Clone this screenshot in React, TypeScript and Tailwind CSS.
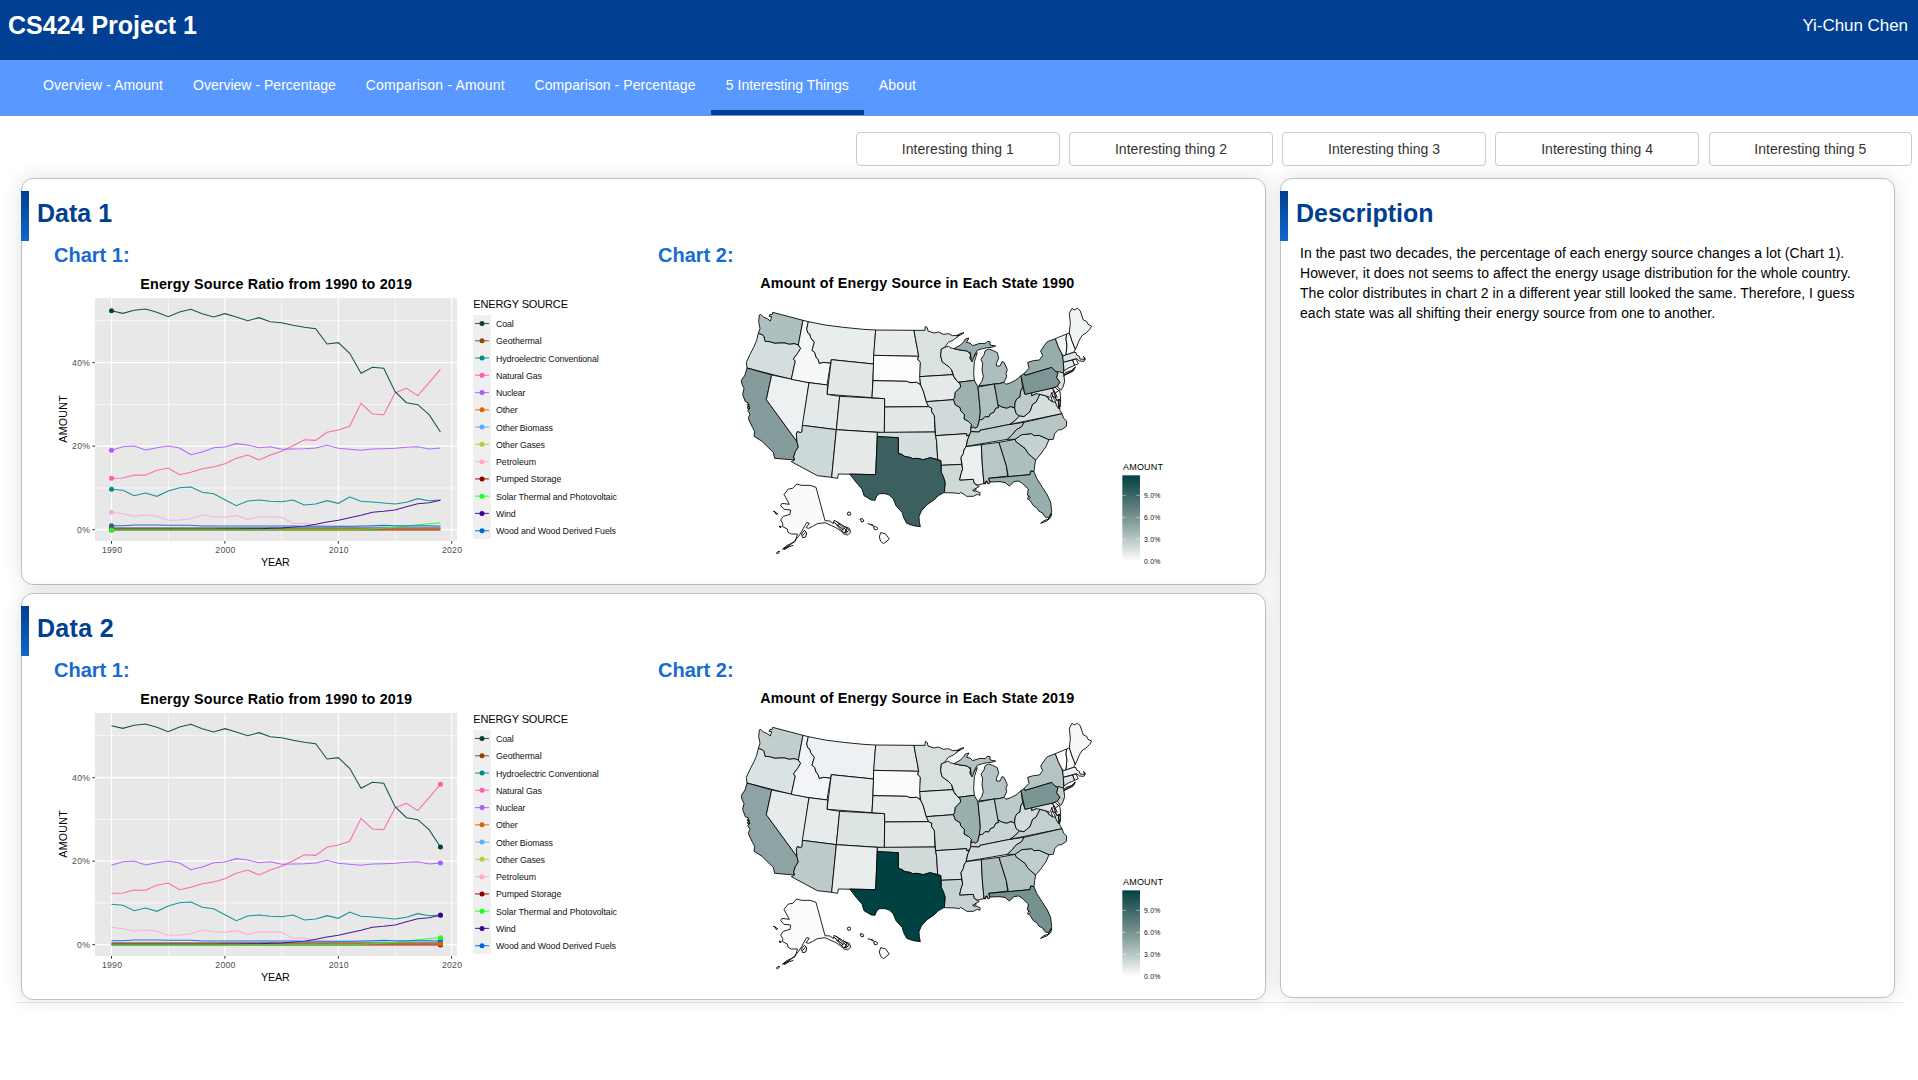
import React from "react";

const NAV: [string, string][] = [
  ["Overview - Amount", "w-[150px] tracking-[0.1px]"],
  ["Overview - Percentage", "w-[172.8px] tracking-[0.02px]"],
  ["Comparison - Amount", "w-[168.8px] tracking-[0.19px]"],
  ["Comparison - Percentage", "w-[191.2px] tracking-[0.06px]"],
  ["5 Interesting Things", "w-[153px] tracking-[0.02px]"],
  ["About", "w-[68px] tracking-[0.15px]"],
];

type Series = { name: string; color: string; y: number[] };

const fill = (n: number, v: number) => Array.from({ length: n }, () => v);

// Vertical plot positions, one per year from 1990 to 2019.
const SERIES: Series[] = [
  { name: "Coal", color: "#004242", y: [182, 190, 181, 177, 187, 200, 186, 178, 191, 201, 191, 201, 212, 203, 215, 218, 226, 232, 236, 282, 278, 310, 370, 352, 355, 425, 458, 464, 494, 546] },
  { name: "Geothermal", color: "#8f4700", y: fill(30, 834) },
  { name: "Hydroelectric Conventional", color: "#008b8b", y: [718, 721, 737, 729, 739, 723, 713, 711, 727, 731, 749, 767, 753, 750, 754, 755, 750, 765, 762, 752, 760, 741, 754, 756, 759, 762, 757, 746, 752, 750] },
  { name: "Natural Gas", color: "#ff5cad", y: [685, 684, 675, 676, 661, 654, 674, 667, 656, 651, 641, 625, 615, 630, 615, 604, 587, 569, 571, 547, 540, 529, 460, 492, 494, 429, 415, 437, 398, 358] },
  { name: "Nuclear", color: "#a85cff", y: [601, 590, 588, 600, 593, 588, 594, 614, 606, 593, 591, 581, 585, 593, 590, 598, 597, 596, 594, 586, 595, 598, 601, 597, 596, 595, 592, 590, 597, 594] },
  { name: "Other", color: "#db6600", y: fill(30, 837) },
  { name: "Other Biomass", color: "#5cadff", y: [...fill(10, 834), ...fill(10, 833), ...fill(10, 831)] },
  { name: "Other Gases", color: "#c4c43d", y: fill(30, 836) },
  { name: "Petroleum", color: "#ffa8d4", y: [787, 791, 799, 795, 799, 811, 810, 806, 795, 800, 802, 797, 808, 801, 801, 802, 820, 820, 826, 829, 830, 832, 834, 833, 832, 833, 834, 834, 833, 834] },
  { name: "Pumped Storage", color: "#8b0000", y: fill(30, 840) },
  { name: "Solar Thermal and Photovoltaic", color: "#1aff1a", y: [...fill(22, 839), 838, 836, 834, 832, 829, 824, 821, 818] },
  { name: "Wind", color: "#3d008f", y: [...fill(9, 838), 838, 837, 837, 836, 836, 835, 834, 831, 829, 823, 816, 811, 803, 796, 787, 784, 780, 770, 761, 758, 751] },
  { name: "Wood and Wood Derived Fuels", color: "#0066db", y: [827, 827, 825, 825, 825, 826, 826, 826, ...fill(8, 828), 828, 829, 829, 829, 829, 829, 828, 827, 826, 827, 827, 827, 827, 828] },
];

const LEGEND_WIDTHS = [53, 137, 308, 138, 88, 65, 171, 147, 120, 196, 363, 59, 360];

const DOTS_1990 = [3, 0, 4, 2, 8, 12, 1, 9, 11, 10];
const DOTS_2019 = [3, 0, 4, 2, 12, 9, 10, 11, 5];

const yearX = (i: number) => 274.5 + i * 34.03;

function LineChart({ dotYear }: { dotYear: number }) {
  const drawOrder = [3, 0, 4, 2, 8, 6, 7, 5, 1, 9, 11, 10, 12].map((i) => SERIES[i]);
  const dots = (dotYear === 0 ? DOTS_1990 : DOTS_2019).map((i) => SERIES[i]);
  return (
    <svg viewBox="6 60 1884 906" className="h-[302px] w-[628px] shrink-0" fontFamily="'Liberation Sans', Arial, sans-serif">
      <text x="361" y="116" fontSize="43" fontWeight="bold" textLength="815">Energy Source Ratio from 1990 to 2019</text>
      <rect x="225" y="144" width="1086" height="729" fill="#e8e8e8" />
      <g stroke="#fff">
        {[212, 463, 714].map((y) => <line key={y} x1="225" x2="1311" y1={y} y2={y} strokeWidth="2" />)}
        {[445, 785, 1126].map((x) => <line key={x} y1="144" y2="873" x1={x} x2={x} strokeWidth="2" />)}
        {[338, 588.5, 839].map((y) => <line key={y} x1="225" x2="1311" y1={y} y2={y} strokeWidth="3.4" />)}
        {[274.5, 614.5, 955, 1295].map((x) => <line key={x} y1="144" y2="873" x1={x} x2={x} strokeWidth="3.4" />)}
      </g>
      <g stroke="#333" strokeWidth="3">
        {[338, 588.5, 839].map((y) => <line key={y} x1="217" x2="225" y1={y} y2={y} />)}
        {[274.5, 614.5, 955, 1295].map((x) => <line key={x} y1="873" y2="881" x1={x} x2={x} />)}
      </g>
      <g fontSize="26" fill="#4d4d4d">
        <text x="156" y="347" textLength="54">40%</text>
        <text x="156" y="598" textLength="54">20%</text>
        <text x="171" y="848" textLength="39">0%</text>
        {["1990", "2000", "2010", "2020"].map((t, i) => (
          <text key={t} x={246 + i * 340} y="908" textLength="60">{t}</text>
        ))}
      </g>
      <text x="723" y="948" fontSize="32" textLength="86">YEAR</text>
      <text transform="translate(140 578) rotate(-90)" fontSize="32" textLength="142">AMOUNT</text>
      {drawOrder.map((s) => (
        <polyline key={s.name} points={s.y.map((y, i) => `${yearX(i)},${y}`).join(" ")} fill="none" stroke={s.color} strokeWidth="3.2" opacity="0.9" />
      ))}
      {dots.map((s) => (
        <circle key={s.name} cx={yearX(dotYear)} cy={s.y[dotYear]} r="7.5" fill={s.color} />
      ))}
      <text x="1360" y="174" fontSize="33" textLength="284">ENERGY SOURCE</text>
      <rect x="1359" y="195" width="54" height="672" fill="#efefef" />
      {SERIES.map((s, i) => (
        <g key={s.name}>
          <line x1="1365" x2="1407" y1={220.5 + i * 51.8} y2={220.5 + i * 51.8} stroke={s.color} strokeWidth="3.4" opacity="0.8" />
          <circle cx="1386" cy={220.5 + i * 51.8} r="7.5" fill={s.color} />
          <text x="1428" y={231 + i * 51.8} fontSize="26.5" fill="#111" textLength={LEGEND_WIDTHS[i]}>{s.name}</text>
        </g>
      ))}
    </svg>
  );
}

// [outline, fill in 1990, fill in 2019]
const STATES: [string, string, string][] = [
  ["88,150 92,148 100,156 112,161 121,168 125,155 117,154 120,148 126,149 128,142 219,166 205,240 193,236 178,238 165,234 150,234 135,235 118,230 105,229 102,215 98,210 85,205 90,190 86,170", "#adbfbf", "#c2cece"],
  ["85,205 98,210 102,215 105,229 118,230 135,235 150,234 165,234 178,238 193,236 205,240 212,250 205,262 190,282 196,288 192,305 184,343 51,309 49,292 60,268 72,245 80,226", "#d5dede", "#dae3e3"],
  ["51,309 125,330 109,404 201,530 205,546 196,560 191,576 194,585 134,580 130,562 112,545 95,528 72,514 74,500 68,488 58,468 55,458 60,448 53,436 59,430 52,418 56,414 46,410 38,388 42,370 36,358 34,346 45,330", "#849c9b", "#8ea4a4"],
  ["125,330 237,353 216,500 212,503 202,500 199,508 201,530 109,404", "#edf1f2", "#e6ebeb"],
  ["219,166 235,170 230,192 234,204 240,208 242,218 253,232 246,256 254,262 258,276 264,283 268,295 280,292 302,294 291,360 237,353 184,343 192,305 196,288 190,282 205,262 212,250 205,240", "#f7f9f8", "#f2f4f7"],
  ["235,170 285,180 340,187 400,193 437,195 430,297 304,284 302,294 280,292 268,295 264,283 258,276 254,262 246,256 253,232 242,218 240,208 234,204 230,192", "#e8eeed", "#eef1f3"],
  ["304,284 431,297 426,398 291,388", "#e1e8e7", "#e6ebeb"],
  ["237,353 293,360 291,388 329,394 319,494 217,481", "#e4e9e9", "#e6ebeb"],
  ["329,394 464,401 463,503 319,494", "#e3e8e8", "#dde5e4"],
  ["217,481 319,494 305,637 262,632 184,590 194,585 191,576 196,560 205,546 201,530 199,508 202,500 212,503 216,500", "#cdd8d8", "#bdcbcb"],
  ["319,494 442,502 437,629 325,627 323,640 305,637", "#e6ebea", "#e9eeed"],
  ["437,195 552,196 556,220 562,250 566,274 431,271", "#e8eceb", "#e5eae9"],
  ["431,271 566,274 563,282 571,292 571,335 570,358 560,352 540,353 530,349 429,347", "#fcfdfc", "#fafbfa"],
  ["429,347 530,349 540,353 560,352 572,360 580,378 586,400 589,410 596,425 464,426 464,401 426,398", "#eaeff0", "#e6ebea"],
  ["464,426 596,425 606,430 604,438 613,452 615,501 463,503", "#e3e8e8", "#e1e8e6"],
  ["442,502 615,501 620,530 623,583 612,581 600,578 580,584 560,580 548,581 540,577 525,575 515,568 505,566 505,518 442,515", "#d6dfe0", "#d0dbda"],
  ["442,515 505,518 505,566 515,568 525,575 540,577 548,581 560,580 580,584 600,578 612,581 623,585 633,587 634,622 640,634 646,652 643,682 625,692 612,705 590,720 574,738 567,755 568,770 571,785 550,782 530,775 522,760 516,742 498,722 490,702 478,690 465,686 448,686 440,693 435,706 424,705 402,692 396,672 380,654 359,627 437,629", "#3b605f", "#004242"],
  ["552,196 585,196 586,184 592,188 594,198 612,204 625,201 640,208 655,206 668,212 690,210 670,225 655,232 643,248 634,252 632,272 636,290 655,304 665,314 668,329 569,335 571,292 563,282 566,274 562,250 556,220", "#dae2e1", "#d7e0df"],
  ["680,213 690,206 702,203 692,210", "#b2c0c0", "#b2c0c0"],
  ["569,335 668,329 675,342 690,354 692,366 676,382 674,398 670,404 589,410 580,378 572,360", "#e5e9ea", "#dee5e5"],
  ["643,248 656,243 660,248 672,251 690,255 712,258 722,268 720,280 726,285 738,265 742,263 733,290 731,325 733,346 684,352 672,335 665,314 655,304 636,290 632,272 634,252", "#dbe3e1", "#dbe3e1"],
  ["672,251 690,241 700,232 706,222 717,219 709,232 720,234 728,242 750,235 766,236 772,229 780,230 780,240 797,243 785,247 772,248 758,251 742,256 736,265 726,291 720,280 722,268 712,258 690,255", "#9aafaf", "#b4c3c3"],
  ["746,363 755,350 760,335 756,315 758,295 753,283 762,270 765,258 775,252 788,256 802,263 806,280 799,295 800,303 810,303 816,290 822,292 832,314 828,325 830,335 822,352 808,356 793,357", "#acbebe", "#b5c4c4"],
  ["684,352 733,346 744,366 751,440 748,465 743,485 735,490 730,486 722,490 724,478 716,470 702,462 703,448 692,438 690,428 676,420 670,404 674,398 676,382 692,366 690,354", "#9cb1b0", "#9ab0af"],
  ["744,366 793,357 806,428 797,430 792,442 782,446 776,456 765,455 758,463 748,465 751,440", "#afc0c0", "#c5d0d0"],
  ["793,357 808,356 822,352 828,358 842,353 858,345 873,332 878,368 872,378 870,396 860,402 855,414 854,429 842,425 830,430 815,426 804,420", "#9ab0af", "#bccaca"],
  ["722,500 722,490 730,486 735,490 743,485 748,465 758,463 765,455 776,456 782,446 792,442 797,430 806,428 804,420 815,426 830,430 842,425 854,429 858,445 868,453 855,467 840,478 750,496 748,501", "#c2cece", "#c9d4d4"],
  ["722,500 748,501 750,496 840,478 882,472 875,485 858,495 848,508 832,523 709,544 712,525 718,510", "#becccb", "#d0dada"],
  ["878,368 885,388 906,382 905,392 918,386 925,384 930,388 924,400 918,412 908,418 900,440 882,455 868,453 858,445 854,429 855,414 860,402 870,396 872,378", "#bdcbca", "#d3dcdc"],
  ["840,478 855,467 868,453 882,455 900,440 908,418 918,412 924,400 930,388 945,392 956,400 966,410 980,412 988,425 990,436 996,446", "#d6dfde", "#c4d0d0"],
  ["906,382 968,369 980,406 991,402 988,418 985,430 979,420 974,404 968,395 966,382 962,392 968,410 954,402 958,396 946,392 930,388 918,386 905,392", "#d6dfde", "#dce3e3"],
  ["968,369 975,367 990,380 992,402 980,406", "#eff3f3", "#eff3f3"],
  ["985,410 992,405 991,424 987,432", "#d6dfde", "#dce3e3"],
  ["873,332 883,325 885,331 965,307 975,318 985,322 980,338 990,352 982,364 968,369 885,388", "#7c9695", "#799594"],
  ["883,325 897,310 893,292 910,287 928,285 938,272 932,258 944,240 952,230 976,221 985,245 995,265 1000,285 1001,325 985,322 975,318 965,307 885,331", "#97adac", "#b4c4c3"],
  ["998,332 1008,322 1025,317 1036,306 1030,318 1012,327", "#97adac", "#b4c4c3"],
  ["985,319 1001,325 1004,350 998,368 992,376 982,364 990,352 980,338", "#dbe3e2", "#c5d0d0"],
  ["976,221 1010,207 1008,222 1011,240 1008,270 1000,273 995,265 985,245", "#f5f7f7", "#fdfdfd"],
  ["1010,207 1018,203 1026,228 1036,253 1031,262 1008,270 1011,240 1008,222", "#f7f9f9", "#f7f8fa"],
  ["1018,203 1021,175 1018,145 1026,130 1032,135 1042,130 1050,136 1060,165 1070,169 1074,178 1085,183 1079,193 1068,204 1056,212 1048,225 1042,240 1036,253 1026,228", "#f0f4f4", "#f5f7f6"],
  ["998,273 1031,262 1038,263 1040,270 1048,274 1050,282 1065,283 1060,274 1066,281 1062,289 1048,288 1040,281 1000,292", "#dbe3e2", "#edf0f1"],
  ["1000,292 1028,285 1034,301 1015,309 1002,318", "#e2e9e8", "#dde4e4"],
  ["1028,285 1038,282 1045,296 1034,301", "#fff", "#f2f4f5"],
  ["589,410 670,404 676,420 690,428 692,438 703,448 702,462 716,470 724,478 722,490 722,500 718,510 710,513 710,506 617,512 613,452 604,438 606,430 596,425", "#d1dada", "#d0dad9"],
  ["617,512 710,506 710,513 718,510 712,525 708,545 702,555 700,566 693,578 695,598 634,601 633,587 623,583 620,530", "#e1e8e6", "#d8e0e1"],
  ["634,601 695,598 698,612 692,630 689,645 730,643 733,655 742,662 748,664 738,670 737,678 750,683 750,691 742,688 730,694 710,694 702,688 692,682 688,686 676,684 643,683 646,652 640,634 634,622", "#ced9d8", "#c6d2d2"],
  ["708,545 754,539 757,600 762,656 742,660 733,655 730,643 689,645 692,630 698,612 693,578 700,566 702,555", "#eaefef", "#d5dede"],
  ["754,539 807,532 829,602 833,633 776,640 780,654 774,657 769,648 766,657 762,656 757,600", "#b9c8c7", "#aebfbd"],
  ["807,532 855,523 858,530 885,550 895,566 917,585 914,602 912,620 902,618 900,629 835,635 829,602", "#aebfbe", "#b3c3c2"],
  ["855,523 875,509 905,506 912,512 928,511 957,524 948,545 930,570 917,585 895,566 885,550 858,530", "#c5d1d0", "#c0cecd"],
  ["882,472 996,446 1001,460 1010,468 1009,484 995,494 985,495 974,506 970,523 957,524 928,511 912,512 905,506 875,509 855,523 832,523 848,508 858,495 875,485", "#b7c6c5", "#b4c4c4"],
  ["776,640 835,635 900,629 902,618 912,620 920,640 938,668 952,690 962,712 965,740 957,757 948,757 942,752 938,744 926,738 922,730 910,722 900,706 895,703 901,697 892,690 895,672 878,656 866,648 852,650 838,663 826,653 810,650 780,651", "#97aeac", "#759190"],
  ["200,657 215,661 240,661 258,667 285,767 300,768 310,776 312,766 325,773 342,784 358,790 362,802 352,810 340,806 330,796 316,787 300,780 285,773 262,776 248,784 236,790 228,788 238,775 230,773 220,790 215,800 205,815 192,830 175,844 158,853 170,842 195,830 200,816 202,807 184,807 174,802 172,792 158,785 158,775 152,765 160,754 180,748 182,735 162,733 152,722 156,715 178,718 162,688 175,672 188,670", "#f9fbfb", "#fbfcfc"],
  ["452,803 466,806 478,822 461,836 452,829 448,816", "#fbfcfc", "#fff"],
];

function UsMap({ year }: { year: "1990" | "2019" }) {
  const col = year === "1990" ? 1 : 2;
  return (
    <svg viewBox="-240 15 1842 906" className="h-[302px] w-[614px] shrink-0" fontFamily="'Liberation Sans', Arial, sans-serif">
      <defs>
        <linearGradient id={`scale-${year}`} x1="0" x2="0" y1="0" y2="1">
          <stop offset="0" stopColor="#004242" />
          <stop offset="0.25" stopColor="#41686a" />
          <stop offset="0.5" stopColor="#7a9593" />
          <stop offset="0.75" stopColor="#b9c8c7" />
          <stop offset="1" stopColor="#fff" />
        </linearGradient>
      </defs>
      <text x="91" y="69" fontSize="43" fontWeight="bold" textLength="942">{`Amount of Energy Source in Each State ${year}`}</text>
      <g stroke="#000" strokeWidth="2.6" strokeLinejoin="round">
        {STATES.map((s) => <polygon key={s[0]} points={s[0]} fill={s[col]} />)}
      </g>
      <g stroke="#000" strokeWidth="2.8" fill="none" strokeLinejoin="round">
        <path d="M965 745l-3 13-12 10-18 7 10-8 12-4zM130 739l6 2 2 7 5-1-4-4zM148 783l6 2-3 4zM139 864l8-6 2 3-6 5zM158 851l14-6 6-4M162 854l16-9 12-4M216 803l8-7 6 8-3 12-9 2-3-8zM218 812l8-10M312 772l28 22M318 768l34 31M318 778l22 24 12 2M330 775l-7 8M344 789l-10 8M356 798l-14 5M351 787l-6 15M340 782l18 14M52 430l4-12 3 14zM892 703l5-12M762 657l8-10 4 8M738 670l-10 6 8 4M720 260l4 24M972 376l10 22M976 384l14-10M966 394l12 4M985 402l4 24M1000 333l16-10 20-15" />
        <circle cx="357" cy="746" r="5" />
        <path d="M390 762l7-1 5 7-7 3zM413 776l16 4M424 781l8 2M431 786l5-2 8 6-4 4-7-1z" />
      </g>
      <text x="1179" y="614" fontSize="27" textLength="120">AMOUNT</text>
      <rect x="1177" y="631" width="53" height="258" fill={`url(#scale-${year})`} />
      {["9.0%", "6.0%", "3.0%", "0.0%"].map((t, i) => (
        <g key={t}>
          {i < 3 && <path d={`M1177 ${691 + i * 66}h11M1219 ${691 + i * 66}h11`} stroke="#fff" strokeWidth="2" opacity="0.7" />}
          <text x="1242" y={698 + i * 66} fontSize="20.5" fill="#111" textLength="49">{t}</text>
        </g>
      ))}
    </svg>
  );
}

function CardTitle({ children }: { children: React.ReactNode }) {
  return (
    <div className="mt-3 -ml-px flex h-[50px] items-center">
      <div className="h-full w-2 bg-linear-to-b from-[#003f92] to-[#1467cc]" />
      <h2 className="ml-2 pb-[5px] text-[25px] leading-none font-bold text-[#003f92]">{children}</h2>
    </div>
  );
}

const CARD = "rounded-xl border border-[#bfbfbf] bg-white shadow-[0_0_20px_rgba(0,0,0,0.12)]";

function DataCard({ title, year, dotYear }: { title: string; year: "1990" | "2019"; dotYear: number }) {
  return (
    <section className={`h-[407px] w-[1245px] ${CARD}`}>
      <CardTitle>
        <span className={year === "2019" ? "tracking-[0.3px]" : ""}>{title}</span>
      </CardTitle>
      <div className="flex h-[29px] items-center pb-[1px] text-[20px] leading-none font-bold text-[#186bd0]">
        <h3 className="w-[604px] pl-8">Chart 1:</h3>
        <h3 className="pl-8">Chart 2:</h3>
      </div>
      <div className="flex">
        <LineChart dotYear={dotYear} />
        <UsMap year={year} />
      </div>
    </section>
  );
}

export default function App() {
  return (
    <div className="h-[1080px] w-full overflow-hidden bg-white font-['Liberation_Sans',Arial,sans-serif] text-sm text-black">
      <header className="flex h-[60px] justify-between bg-[#003f92] px-2 text-white">
        <h1 className="pt-[11px] text-[25px] leading-[28px] font-bold">CS424 Project 1</h1>
        <div className="pt-[14px] pr-0.5 text-[17px] leading-6 tracking-[-0.05px]">Yi-Chun Chen</div>
      </header>
      <nav className="flex h-14 bg-[#5898ff] pl-7 text-white">
        {NAV.map(([label, size], i) => (
          <a key={label} className={`h-[55px] px-[15px] pt-[15px] leading-5 whitespace-nowrap ${size} ${i === 4 ? "border-b-[5px] border-[#003f92]" : ""}`}>
            {label}
          </a>
        ))}
      </nav>
      <div className="overflow-hidden pb-[9px]">
        <div className="mt-4 flex justify-end gap-[9.6px] pr-[6px]">
          {[1, 2, 3, 4, 5].map((n) => (
            <button key={n} className="h-[34px] w-[203.5px] rounded border border-[#ccc] bg-white tracking-[0.04px] text-[#333]">
              Interesting thing {n}
            </button>
          ))}
        </div>
        <main className="mt-3 flex gap-[14px] pl-[21px]">
          <div className="flex flex-col gap-2">
            <DataCard title="Data 1" year="1990" dotYear={0} />
            <DataCard title="Data 2" year="2019" dotYear={29} />
          </div>
          <section className={`h-[820px] w-[615px] ${CARD}`}>
            <CardTitle>Description</CardTitle>
            <p className="mt-[2px] ml-[19px] w-[580px] leading-5 whitespace-nowrap">
              <span className="tracking-[0.03px]">In the past two decades, the percentage of each energy source changes a lot (Chart 1).</span>
              <br />
              <span className="tracking-[0.055px]">However, it does not seems to affect the energy usage distribution for the whole country.</span>
              <br />
              <span className="tracking-[0.035px]">The color distributes in chart 2 in a different year still looked the same. Therefore, I guess</span>
              <br />
              <span className="tracking-[0.04px]">each state was all shifting their energy source from one to another.</span>
            </p>
          </section>
        </main>
        <hr className="mx-[15px] mt-[2px] border-[#e8e8e8]" />
      </div>
    </div>
  );
}
